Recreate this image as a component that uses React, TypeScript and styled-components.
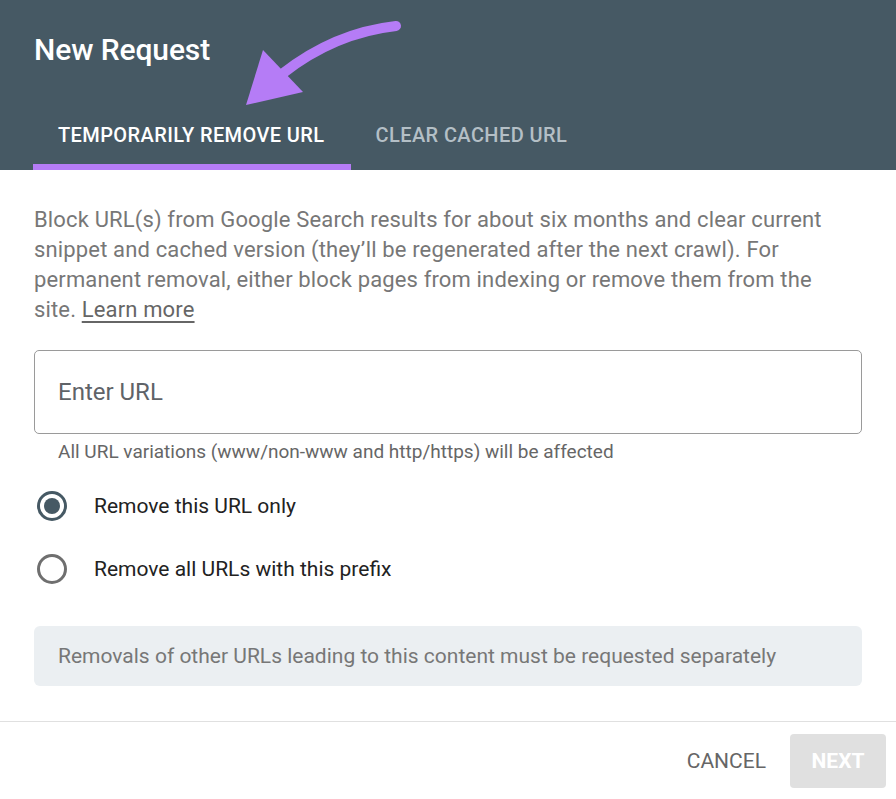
import React from "react";
import styled, { createGlobalStyle } from "styled-components";

const GlobalStyle = createGlobalStyle`
  html, body {
    margin: 0;
    padding: 0;
    background: #ffffff;
  }
  body {
    font-family: Roboto, "Liberation Sans", Arial, sans-serif;
  }
`;

const Dialog = styled.div`
  position: relative;
  width: 896px;
  height: 799px;
  background: #ffffff;
  display: flex;
  flex-direction: column;
  overflow: hidden;
`;

const Header = styled.header`
  background: #465964;
  padding: 0 34px;
  height: 170px;
  box-sizing: border-box;
  display: flex;
  flex-direction: column;
  justify-content: space-between;
`;

const Title = styled.h1`
  margin: 0;
  padding-top: 32px;
  font-size: 30px;
  line-height: 36px;
  font-weight: 500;
  color: #ffffff;
  letter-spacing: -0.1px;
`;

const Tabs = styled.div`
  display: flex;
  margin-left: -1px;
`;

const Tab = styled.div<{ $active?: boolean }>`
  padding: 5px 26px 0 25px;
  height: 70px;
  box-sizing: border-box;
  display: flex;
  align-items: center;
  font-size: 20px;
  font-weight: 500;
  letter-spacing: 0.4px;
  text-transform: uppercase;
  color: ${(p) => (p.$active ? "#ffffff" : "#b4bfc6")};
  border-bottom: 6px solid ${(p) => (p.$active ? "#b57cf6" : "transparent")};
`;

const Body = styled.div`
  padding: 0 34px;
  flex: 1;
`;

const Description = styled.p`
  margin: 0;
  padding-top: 35px;
  font-size: 22px;
  line-height: 30px;
  letter-spacing: 0.15px;
  color: #777777;
`;

const LearnLink = styled.a`
  color: #666666;
  text-decoration: underline;
  text-underline-offset: 4px;
`;

const UrlField = styled.div`
  margin-top: 25px;
  height: 84px;
  box-sizing: border-box;
  border: 1px solid #9a9a9a;
  border-radius: 5px;
  display: flex;
  align-items: center;
  padding: 0 23px;
  font-size: 24px;
  color: #5f6368;
`;

const Helper = styled.div`
  margin-top: 6px;
  padding-left: 24px;
  font-size: 19px;
  color: #666666;
`;

const RadioGroup = styled.div`
  margin-top: 28px;
  display: flex;
  flex-direction: column;
  gap: 33px;
`;

const RadioRow = styled.label`
  display: flex;
  align-items: center;
  gap: 27px;
  height: 30px;
  padding-left: 3px;
  font-size: 21px;
  color: #222222;
`;

const RadioCircle = styled.span<{ $checked?: boolean }>`
  width: 30px;
  height: 30px;
  box-sizing: border-box;
  border-radius: 50%;
  border: 3px solid ${(p) => (p.$checked ? "#465964" : "#6f6f6f")};
  display: flex;
  align-items: center;
  justify-content: center;
  &::after {
    content: "";
    display: ${(p) => (p.$checked ? "block" : "none")};
    width: 16px;
    height: 16px;
    border-radius: 50%;
    background: #465964;
  }
`;

const Notice = styled.div`
  margin-top: 42px;
  height: 60px;
  box-sizing: border-box;
  background: #ebeff2;
  border-radius: 6px;
  display: flex;
  align-items: center;
  padding: 0 24px;
  font-size: 21px;
  color: #777777;
`;

const Footer = styled.footer`
  border-top: 1px solid #e0e0e0;
  height: 78px;
  box-sizing: border-box;
  display: flex;
  align-items: center;
  justify-content: flex-end;
  gap: 24px;
  padding: 0 10px 0 0;
`;

const TextButton = styled.button`
  border: none;
  background: none;
  font-family: inherit;
  font-size: 21px;
  font-weight: 400;
  color: #666666;
  padding: 0;
`;

const FilledButton = styled.button`
  border: none;
  background: #e0e0e0;
  border-radius: 4px;
  width: 96px;
  height: 54px;
  font-family: inherit;
  font-size: 21px;
  font-weight: 700;
  color: #ffffff;
`;

const ArrowOverlay = styled.svg`
  position: absolute;
  left: 0;
  top: 0;
  pointer-events: none;
`;

export default function App() {
  return (
    <>
      <GlobalStyle />
      <Dialog>
        <Header>
          <Title>New Request</Title>
          <Tabs>
            <Tab $active>Temporarily remove URL</Tab>
            <Tab>Clear cached URL</Tab>
          </Tabs>
        </Header>
        <Body>
          <Description>
            Block URL(s) from Google Search results for about six months and clear current
            <br />
            snippet and cached version (they’ll be regenerated after the next crawl). For
            <br />
            permanent removal, either block pages from indexing or remove them from the
            <br />
            site. <LearnLink>Learn more</LearnLink>
          </Description>
          <UrlField>Enter URL</UrlField>
          <Helper>All URL variations (www/non-www and http/https) will be affected</Helper>
          <RadioGroup>
            <RadioRow>
              <RadioCircle $checked />
              Remove this URL only
            </RadioRow>
            <RadioRow>
              <RadioCircle />
              Remove all URLs with this prefix
            </RadioRow>
          </RadioGroup>
          <Notice>Removals of other URLs leading to this content must be requested separately</Notice>
        </Body>
        <Footer>
          <TextButton>CANCEL</TextButton>
          <FilledButton>NEXT</FilledButton>
        </Footer>
        <ArrowOverlay width="896" height="170" viewBox="0 0 896 170">
          <path
            d="M396 26 C 360 30, 320 44, 282 74"
            fill="none"
            stroke="#b57cf6"
            strokeWidth="10"
            strokeLinecap="round"
          />
          <polygon points="263,50 303,92 246,105" fill="#b57cf6" />
        </ArrowOverlay>
      </Dialog>
    </>
  );
}
